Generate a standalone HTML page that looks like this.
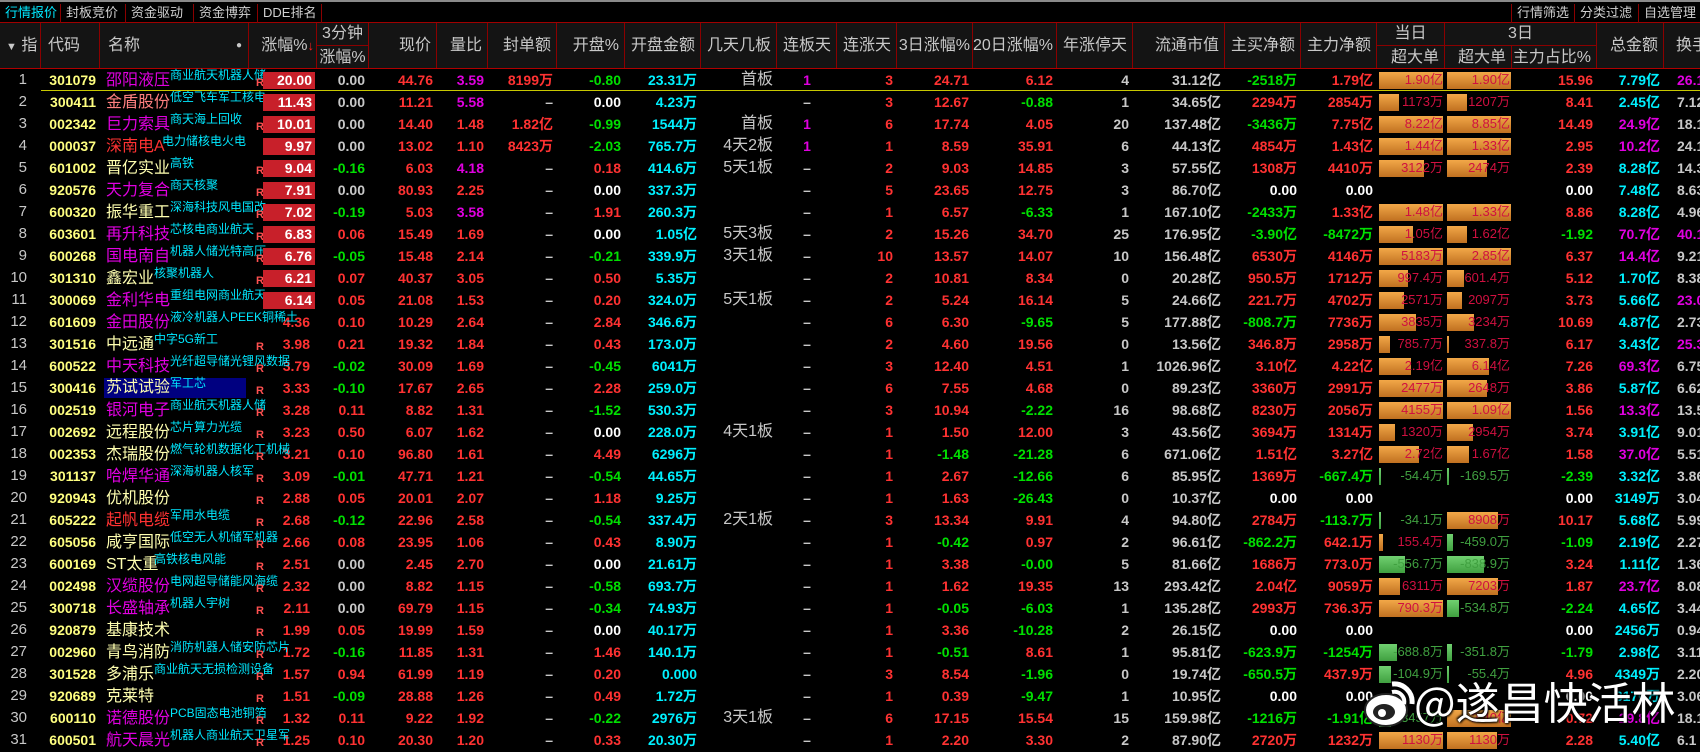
<!DOCTYPE html>
<html><head><meta charset="utf-8">
<style>
*{margin:0;padding:0;box-sizing:border-box}
html,body{width:1700px;height:737px;overflow:hidden;background:#000;font-family:"Liberation Sans","Noto Sans CJK SC",sans-serif}
#tabs{position:absolute;left:0;top:0;width:1700px;height:23px;border-top:2px solid #8a8a8a;border-bottom:1px solid #a00000}
#tabs span{position:absolute;top:2px;height:20px;font-size:13px;color:#d0d0d0;line-height:18px;padding-left:5px;border-right:1px solid #8b0000}
#hd{position:absolute;left:0;top:23px;width:1700px;height:46px;background:#141414;border-bottom:1px solid #b00000}
#hd div{position:absolute;top:0;height:45px;border-right:1px solid #8b0000;color:#c8c8c8;font-size:16px;line-height:45px;text-align:right;padding-right:5px;white-space:nowrap}
#hd div.h2{height:22px;line-height:22px}
#hd div.lo{top:22px;height:23px;line-height:23px;border-top:1px solid #8b0000}
#yl{position:absolute;left:41px;top:90px;width:1659px;height:1px;background:#c8c800;z-index:2}
table{position:absolute;left:0;top:69px;width:1700px;display:grid;grid-template-columns:41px 59px 149px 68px 52px 68px 51px 69px 68px 76px 76px 60px 60px 76px 84px 76px 92px 76px 76px 68px 67px 85px 67px 36px;grid-auto-rows:22px}
colgroup{display:none}
tbody,tr{display:contents}
td{display:block;height:22px;padding:0 4px 0 0;text-align:right;font-size:14px;font-weight:bold;white-space:nowrap;color:#c8c8c8;overflow:visible;line-height:22px;position:relative}
td.n{padding-right:14px;font-weight:normal;font-size:15px}
td.cd{color:#ffff80}
td.nm{text-align:left;padding-left:6px;font-weight:normal}
.nm div{position:relative;white-space:nowrap;height:22px}
.nm span{font-size:16px;line-height:22px;position:absolute;left:0;top:1px}
.nm em{font-style:normal;font-size:12px;line-height:14px;font-weight:normal;color:#00e8ff;position:absolute;top:-1px;z-index:1}
.nm em.e4{left:64px}.nm em.e3{left:48px}.nm em.e5{left:56px}
.zf div{position:relative;height:22px}
.R{position:absolute;left:7px;top:8px;font-size:11px;font-weight:bold;color:#ff5050;line-height:12px;z-index:2}
.bx{position:absolute;left:14px;top:3px;width:52px;height:17px;background:#c8202a;color:#fff;text-align:right;padding-right:3px;line-height:17px;z-index:2}
.zt{position:absolute;right:3px;top:0;color:#ff3232;line-height:22px}
td.ct{text-align:center;padding:0}
td.t{font-weight:normal;font-size:16px}
.r{color:#ff3232}.g{color:#00e000}.c{color:#00f0ff}.m{color:#e000e0}.w{color:#fff}.s{color:#c8c8c8}.p{color:#ffffb0}.k{color:#ff8080}
td.b{padding:0}
.b div{position:relative;height:22px}
.b i{position:absolute;left:2px;top:3px;height:17px;background:linear-gradient(#f2a848,#c07020)}
.b i.gg{background:linear-gradient(#70d070,#40a040)}
.b u{position:absolute;right:2px;top:0;line-height:22px;text-decoration:none;font-size:13px;font-weight:normal;color:#d01040}
.b u.gn{color:#40a040}
td.hs{text-align:left;padding-left:13px}
#wm{position:absolute;left:1362px;top:668px;width:338px;height:69px;z-index:5}
#wm .tx{position:absolute;left:52px;top:4px;font-size:44px;color:#fff;font-family:"Noto Sans CJK SC",sans-serif;line-height:56px;text-shadow:0 0 2px #000,1px 1px 2px #000,-1px -1px 2px #000}
.sel{background:#000080}
</style></head><body>
<div id="tabs">
<span style="left:0;width:61px;color:#00e8ff">行情报价</span>
<span style="left:61px;width:65px">封板竞价</span>
<span style="left:126px;width:68px">资金驱动力</span>
<span style="left:194px;width:64px">资金博弈</span>
<span style="left:258px;width:64px">DDE排名</span>
<span style="left:1511px;width:64px;border-left:1px solid #8b0000">行情筛选</span>
<span style="left:1575px;width:64px">分类过滤</span>
<span style="left:1639px;width:61px;border-right:none">自选管理</span>
</div>
<div id="hd">
<div style="left:0;width:41px;text-align:left;padding-left:6px"><span style="font-size:11px">▼</span> 指</div>
<div style="left:41px;width:59px;text-align:left;padding-left:7px">代码</div>
<div style="left:100px;width:149px;text-align:left;padding-left:8px">名称<span style="position:absolute;right:6px;top:0;font-size:10px">●</span></div>
<div style="left:249px;width:68px;padding-right:2px">涨幅%<span style="color:#ff2020;font-size:13px">↓</span></div>
<div class="h2" style="left:317px;width:52px;text-align:center;padding:0">3分钟</div>
<div class="lo" style="left:317px;width:52px;text-align:center;padding:0">涨幅%</div>
<div style="left:369px;width:68px">现价</div>
<div style="left:437px;width:51px">量比</div>
<div style="left:488px;width:69px">封单额</div>
<div style="left:557px;width:68px">开盘%</div>
<div style="left:625px;width:76px">开盘金额</div>
<div style="left:701px;width:76px">几天几板</div>
<div style="left:777px;width:60px">连板天</div>
<div style="left:837px;width:60px">连涨天</div>
<div style="left:897px;width:76px;padding-right:2px">3日涨幅%</div>
<div style="left:973px;width:84px">20日涨幅%</div>
<div style="left:1057px;width:76px">年涨停天</div>
<div style="left:1133px;width:92px">流通市值</div>
<div style="left:1225px;width:76px">主买净额</div>
<div style="left:1301px;width:76px">主力净额</div>
<div class="h2" style="left:1377px;width:68px;text-align:center;padding:0">当日</div>
<div class="lo" style="left:1377px;width:68px">超大单</div>
<div class="h2" style="left:1445px;width:152px;text-align:center;padding:0">3日</div>
<div class="lo" style="left:1445px;width:67px">超大单</div>
<div class="lo" style="left:1512px;width:85px">主力占比%</div>
<div style="left:1597px;width:67px">总金额</div>
<div style="left:1664px;width:36px;text-align:left;padding-left:12px;border-right:none">换手</div>
</div>
<div id="yl"></div>
<table>
<colgroup><col></colgroup>
<tr><td class="n">1</td><td class="cd">301079</td><td class="nm"><div><span class="m">邵阳液压</span><em class="e4">商业航天机器人储</em></div></td><td class="zf"><div><b class="R">R</b><span class="bx">20.00</span></div></td><td class="s">0.00</td><td class="r">44.76</td><td class="m">3.59</td><td class="r">8199万</td><td class="g">-0.80</td><td class="c">23.31万</td><td class="t">首板</td><td class="ct m">1</td><td class="r">3</td><td class="r">24.71</td><td class="r">6.12</td><td>4</td><td>31.12亿</td><td class="g">-2518万</td><td class="r">1.79亿</td><td class="b"><div><i style="width:64px"></i><u>1.90亿</u></div></td><td class="b"><div><i style="width:64px"></i><u>1.90亿</u></div></td><td class="r">15.96</td><td class="c">7.79亿</td><td class="hs m">26.1</td></tr>
<tr><td class="n">2</td><td class="cd">300411</td><td class="nm"><div><span class="k">金盾股份</span><em class="e4">低空飞车军工核电</em></div></td><td class="zf"><div><span class="bx">11.43</span></div></td><td class="s">0.00</td><td class="r">11.21</td><td class="m">5.58</td><td>–</td><td class="w">0.00</td><td class="c">4.23万</td><td class="t"></td><td class="ct">–</td><td class="r">3</td><td class="r">12.67</td><td class="g">-0.88</td><td>1</td><td>34.65亿</td><td class="r">2294万</td><td class="r">2854万</td><td class="b"><div><i style="width:20px"></i><u>1173万</u></div></td><td class="b"><div><i style="width:20px"></i><u>1207万</u></div></td><td class="r">8.41</td><td class="c">2.45亿</td><td class="hs">7.12</td></tr>
<tr><td class="n">3</td><td class="cd">002342</td><td class="nm"><div><span class="m">巨力索具</span><em class="e4">商天海上回收</em></div></td><td class="zf"><div><b class="R">R</b><span class="bx">10.01</span></div></td><td class="s">0.00</td><td class="r">14.40</td><td class="r">1.48</td><td class="r">1.82亿</td><td class="g">-0.99</td><td class="c">1544万</td><td class="t">首板</td><td class="ct m">1</td><td class="r">6</td><td class="r">17.74</td><td class="r">4.05</td><td>20</td><td>137.48亿</td><td class="g">-3436万</td><td class="r">7.75亿</td><td class="b"><div><i style="width:64px"></i><u>8.22亿</u></div></td><td class="b"><div><i style="width:64px"></i><u>8.85亿</u></div></td><td class="r">14.49</td><td class="m">24.9亿</td><td class="hs">18.1</td></tr>
<tr><td class="n">4</td><td class="cd">000037</td><td class="nm"><div><span class="r">深南电A</span><em class="e5">电力储核电火电</em></div></td><td class="zf"><div><span class="bx">9.97</span></div></td><td class="s">0.00</td><td class="r">13.02</td><td class="r">1.10</td><td class="r">8423万</td><td class="g">-2.03</td><td class="c">765.7万</td><td class="t">4天2板</td><td class="ct m">1</td><td class="r">1</td><td class="r">8.59</td><td class="r">35.91</td><td>6</td><td>44.13亿</td><td class="r">4854万</td><td class="r">1.43亿</td><td class="b"><div><i style="width:64px"></i><u>1.44亿</u></div></td><td class="b"><div><i style="width:64px"></i><u>1.33亿</u></div></td><td class="r">2.95</td><td class="m">10.2亿</td><td class="hs">24.1</td></tr>
<tr><td class="n">5</td><td class="cd">601002</td><td class="nm"><div><span class="p">晋亿实业</span><em class="e4">高铁</em></div></td><td class="zf"><div><b class="R">R</b><span class="bx">9.04</span></div></td><td class="g">-0.16</td><td class="r">6.03</td><td class="m">4.18</td><td>–</td><td class="r">0.18</td><td class="c">414.6万</td><td class="t">5天1板</td><td class="ct">–</td><td class="r">2</td><td class="r">9.03</td><td class="r">14.85</td><td>3</td><td>57.55亿</td><td class="r">1308万</td><td class="r">4410万</td><td class="b"><div><i style="width:45px"></i><u>3122万</u></div></td><td class="b"><div><i style="width:40px"></i><u>2474万</u></div></td><td class="r">2.39</td><td class="c">8.28亿</td><td class="hs">14.3</td></tr>
<tr><td class="n">6</td><td class="cd">920576</td><td class="nm"><div><span class="m">天力复合</span><em class="e4">商天核聚</em></div></td><td class="zf"><div><b class="R">R</b><span class="bx">7.91</span></div></td><td class="s">0.00</td><td class="r">80.93</td><td class="r">2.25</td><td>–</td><td class="w">0.00</td><td class="c">337.3万</td><td class="t"></td><td class="ct">–</td><td class="r">5</td><td class="r">23.65</td><td class="r">12.75</td><td>3</td><td>86.70亿</td><td class="w">0.00</td><td class="w">0.00</td><td></td><td></td><td class="w">0.00</td><td class="c">7.48亿</td><td class="hs">8.63</td></tr>
<tr><td class="n">7</td><td class="cd">600320</td><td class="nm"><div><span class="p">振华重工</span><em class="e4">深海科技风电国改</em></div></td><td class="zf"><div><b class="R">R</b><span class="bx">7.02</span></div></td><td class="g">-0.19</td><td class="r">5.03</td><td class="m">3.58</td><td>–</td><td class="r">1.91</td><td class="c">260.3万</td><td class="t"></td><td class="ct">–</td><td class="r">1</td><td class="r">6.57</td><td class="g">-6.33</td><td>1</td><td>167.10亿</td><td class="g">-2433万</td><td class="r">1.33亿</td><td class="b"><div><i style="width:64px"></i><u>1.48亿</u></div></td><td class="b"><div><i style="width:64px"></i><u>1.33亿</u></div></td><td class="r">8.86</td><td class="c">8.28亿</td><td class="hs">4.96</td></tr>
<tr><td class="n">8</td><td class="cd">603601</td><td class="nm"><div><span class="m">再升科技</span><em class="e4">芯核电商业航天</em></div></td><td class="zf"><div><b class="R">R</b><span class="bx">6.83</span></div></td><td class="r">0.06</td><td class="r">15.49</td><td class="r">1.69</td><td>–</td><td class="w">0.00</td><td class="c">1.05亿</td><td class="t">5天3板</td><td class="ct">–</td><td class="r">2</td><td class="r">15.26</td><td class="r">34.70</td><td>25</td><td>176.95亿</td><td class="g">-3.90亿</td><td class="g">-8472万</td><td class="b"><div><i style="width:34px"></i><u>1.05亿</u></div></td><td class="b"><div><i style="width:20px"></i><u>1.62亿</u></div></td><td class="g">-1.92</td><td class="m">70.7亿</td><td class="hs m">40.1</td></tr>
<tr><td class="n">9</td><td class="cd">600268</td><td class="nm"><div><span class="m">国电南自</span><em class="e4">机器人储光特高压</em></div></td><td class="zf"><div><b class="R">R</b><span class="bx">6.76</span></div></td><td class="g">-0.05</td><td class="r">15.48</td><td class="r">2.14</td><td>–</td><td class="g">-0.21</td><td class="c">339.9万</td><td class="t">3天1板</td><td class="ct">–</td><td class="r">10</td><td class="r">13.57</td><td class="r">14.07</td><td>10</td><td>156.48亿</td><td class="r">6530万</td><td class="r">4146万</td><td class="b"><div><i style="width:64px"></i><u>5183万</u></div></td><td class="b"><div><i style="width:64px"></i><u>2.85亿</u></div></td><td class="r">6.37</td><td class="m">14.4亿</td><td class="hs">9.21</td></tr>
<tr><td class="n">10</td><td class="cd">301310</td><td class="nm"><div><span class="p">鑫宏业</span><em class="e3">核聚机器人</em></div></td><td class="zf"><div><b class="R">R</b><span class="bx">6.21</span></div></td><td class="r">0.07</td><td class="r">40.37</td><td class="r">3.05</td><td>–</td><td class="r">0.50</td><td class="c">5.35万</td><td class="t"></td><td class="ct">–</td><td class="r">2</td><td class="r">10.81</td><td class="r">8.34</td><td>0</td><td>20.28亿</td><td class="r">950.5万</td><td class="r">1712万</td><td class="b"><div><i style="width:29px"></i><u>997.4万</u></div></td><td class="b"><div><i style="width:17px"></i><u>601.4万</u></div></td><td class="r">5.12</td><td class="c">1.70亿</td><td class="hs">8.38</td></tr>
<tr><td class="n">11</td><td class="cd">300069</td><td class="nm"><div><span class="m">金利华电</span><em class="e4">重组电网商业航天</em></div></td><td class="zf"><div><span class="bx">6.14</span></div></td><td class="r">0.05</td><td class="r">21.08</td><td class="r">1.53</td><td>–</td><td class="r">0.20</td><td class="c">324.0万</td><td class="t">5天1板</td><td class="ct">–</td><td class="r">2</td><td class="r">5.24</td><td class="r">16.14</td><td>5</td><td>24.66亿</td><td class="r">221.7万</td><td class="r">4702万</td><td class="b"><div><i style="width:25px"></i><u>2571万</u></div></td><td class="b"><div><i style="width:15px"></i><u>2097万</u></div></td><td class="r">3.73</td><td class="c">5.66亿</td><td class="hs m">23.0</td></tr>
<tr><td class="n">12</td><td class="cd">601609</td><td class="nm"><div><span class="m">金田股份</span><em class="e4">液冷机器人PEEK铜稀土</em></div></td><td class="zf"><div><span class="zt">4.36</span></div></td><td class="r">0.10</td><td class="r">10.29</td><td class="r">2.64</td><td>–</td><td class="r">2.84</td><td class="c">346.6万</td><td class="t"></td><td class="ct">–</td><td class="r">6</td><td class="r">6.30</td><td class="g">-9.65</td><td>5</td><td>177.88亿</td><td class="g">-808.7万</td><td class="r">7736万</td><td class="b"><div><i style="width:37px"></i><u>3835万</u></div></td><td class="b"><div><i style="width:27px"></i><u>3234万</u></div></td><td class="r">10.69</td><td class="c">4.87亿</td><td class="hs">2.73</td></tr>
<tr><td class="n">13</td><td class="cd">301516</td><td class="nm"><div><span class="p">中远通</span><em class="e3">中字5G新工</em></div></td><td class="zf"><div><b class="R">R</b><span class="zt">3.98</span></div></td><td class="r">0.21</td><td class="r">19.32</td><td class="r">1.84</td><td>–</td><td class="r">0.43</td><td class="c">173.0万</td><td class="t"></td><td class="ct">–</td><td class="r">2</td><td class="r">4.60</td><td class="r">19.56</td><td>0</td><td>13.56亿</td><td class="r">346.8万</td><td class="r">2958万</td><td class="b"><div><i style="width:11px"></i><u>785.7万</u></div></td><td class="b"><div><i style="width:2px"></i><u>337.8万</u></div></td><td class="r">6.17</td><td class="c">3.43亿</td><td class="hs m">25.3</td></tr>
<tr><td class="n">14</td><td class="cd">600522</td><td class="nm"><div><span class="m">中天科技</span><em class="e4">光纤超导储光锂风数据</em></div></td><td class="zf"><div><b class="R">R</b><span class="zt">3.79</span></div></td><td class="g">-0.02</td><td class="r">30.09</td><td class="r">1.69</td><td>–</td><td class="g">-0.45</td><td class="c">6041万</td><td class="t"></td><td class="ct">–</td><td class="r">3</td><td class="r">12.40</td><td class="r">4.51</td><td>1</td><td>1026.96亿</td><td class="r">3.10亿</td><td class="r">4.22亿</td><td class="b"><div><i style="width:32px"></i><u>2.19亿</u></div></td><td class="b"><div><i style="width:42px"></i><u>6.14亿</u></div></td><td class="r">7.26</td><td class="m">69.3亿</td><td class="hs">6.75</td></tr>
<tr><td class="n">15</td><td class="cd">300416</td><td class="nm"><div><span class="p sel" style="left:-2px;top:1px;padding-left:2px;width:142px;height:20px;line-height:20px">苏试试验</span><em class="e4">军工芯</em></div></td><td class="zf"><div><b class="R">R</b><span class="zt">3.33</span></div></td><td class="g">-0.10</td><td class="r">17.67</td><td class="r">2.65</td><td>–</td><td class="r">2.28</td><td class="c">259.0万</td><td class="t"></td><td class="ct">–</td><td class="r">6</td><td class="r">7.55</td><td class="r">4.68</td><td>0</td><td>89.23亿</td><td class="r">3360万</td><td class="r">2991万</td><td class="b"><div><i style="width:64px"></i><u>2477万</u></div></td><td class="b"><div><i style="width:40px"></i><u>2648万</u></div></td><td class="r">3.86</td><td class="c">5.87亿</td><td class="hs">6.62</td></tr>
<tr><td class="n">16</td><td class="cd">002519</td><td class="nm"><div><span class="m">银河电子</span><em class="e4">商业航天机器人储</em></div></td><td class="zf"><div><b class="R">R</b><span class="zt">3.28</span></div></td><td class="r">0.11</td><td class="r">8.82</td><td class="r">1.31</td><td>–</td><td class="g">-1.52</td><td class="c">530.3万</td><td class="t"></td><td class="ct">–</td><td class="r">3</td><td class="r">10.94</td><td class="g">-2.22</td><td>16</td><td>98.68亿</td><td class="r">8230万</td><td class="r">2056万</td><td class="b"><div><i style="width:64px"></i><u>4155万</u></div></td><td class="b"><div><i style="width:64px"></i><u>1.09亿</u></div></td><td class="r">1.56</td><td class="m">13.3亿</td><td class="hs">13.5</td></tr>
<tr><td class="n">17</td><td class="cd">002692</td><td class="nm"><div><span class="p">远程股份</span><em class="e4">芯片算力光缆</em></div></td><td class="zf"><div><b class="R">R</b><span class="zt">3.23</span></div></td><td class="r">0.50</td><td class="r">6.07</td><td class="r">1.62</td><td>–</td><td class="w">0.00</td><td class="c">228.0万</td><td class="t">4天1板</td><td class="ct">–</td><td class="r">1</td><td class="r">1.50</td><td class="r">12.00</td><td>3</td><td>43.56亿</td><td class="r">3694万</td><td class="r">1314万</td><td class="b"><div><i style="width:16px"></i><u>1320万</u></div></td><td class="b"><div><i style="width:26px"></i><u>2954万</u></div></td><td class="r">3.74</td><td class="c">3.91亿</td><td class="hs">9.01</td></tr>
<tr><td class="n">18</td><td class="cd">002353</td><td class="nm"><div><span class="p">杰瑞股份</span><em class="e4">燃气轮机数据化工机械</em></div></td><td class="zf"><div><b class="R">R</b><span class="zt">3.21</span></div></td><td class="r">0.10</td><td class="r">96.80</td><td class="r">1.61</td><td>–</td><td class="r">4.49</td><td class="c">6296万</td><td class="t"></td><td class="ct">–</td><td class="r">1</td><td class="g">-1.48</td><td class="g">-21.28</td><td>6</td><td>671.06亿</td><td class="r">1.51亿</td><td class="r">3.27亿</td><td class="b"><div><i style="width:40px"></i><u>2.72亿</u></div></td><td class="b"><div><i style="width:22px"></i><u>1.67亿</u></div></td><td class="r">1.58</td><td class="m">37.0亿</td><td class="hs">5.51</td></tr>
<tr><td class="n">19</td><td class="cd">301137</td><td class="nm"><div><span class="m">哈焊华通</span><em class="e4">深海机器人核军</em></div></td><td class="zf"><div><b class="R">R</b><span class="zt">3.09</span></div></td><td class="g">-0.01</td><td class="r">47.71</td><td class="r">1.21</td><td>–</td><td class="g">-0.54</td><td class="c">44.65万</td><td class="t"></td><td class="ct">–</td><td class="r">1</td><td class="r">2.67</td><td class="g">-12.66</td><td>6</td><td>85.95亿</td><td class="r">1369万</td><td class="g">-667.4万</td><td class="b"><div><i class="gg" style="width:2px"></i><u class="gn">-54.4万</u></div></td><td class="b"><div><i class="gg" style="width:2px"></i><u class="gn">-169.5万</u></div></td><td class="g">-2.39</td><td class="c">3.32亿</td><td class="hs">3.86</td></tr>
<tr><td class="n">20</td><td class="cd">920943</td><td class="nm"><div><span class="p">优机股份</span></div></td><td class="zf"><div><b class="R">R</b><span class="zt">2.88</span></div></td><td class="r">0.05</td><td class="r">20.01</td><td class="r">2.07</td><td>–</td><td class="r">1.18</td><td class="c">9.25万</td><td class="t"></td><td class="ct">–</td><td class="r">1</td><td class="r">1.63</td><td class="g">-26.43</td><td>0</td><td>10.37亿</td><td class="w">0.00</td><td class="w">0.00</td><td></td><td></td><td class="w">0.00</td><td class="c">3149万</td><td class="hs">3.04</td></tr>
<tr><td class="n">21</td><td class="cd">605222</td><td class="nm"><div><span class="r">起帆电缆</span><em class="e4">军用水电缆</em></div></td><td class="zf"><div><b class="R">R</b><span class="zt">2.68</span></div></td><td class="g">-0.12</td><td class="r">22.96</td><td class="r">2.58</td><td>–</td><td class="g">-0.54</td><td class="c">337.4万</td><td class="t">2天1板</td><td class="ct">–</td><td class="r">3</td><td class="r">13.34</td><td class="r">9.91</td><td>4</td><td>94.80亿</td><td class="r">2784万</td><td class="g">-113.7万</td><td class="b"><div><i class="gg" style="width:2px"></i><u class="gn">-34.1万</u></div></td><td class="b"><div><i style="width:51px"></i><u>8908万</u></div></td><td class="r">10.17</td><td class="c">5.68亿</td><td class="hs">5.99</td></tr>
<tr><td class="n">22</td><td class="cd">605056</td><td class="nm"><div><span class="p">咸亨国际</span><em class="e4">低空无人机储军机器</em></div></td><td class="zf"><div><b class="R">R</b><span class="zt">2.66</span></div></td><td class="r">0.08</td><td class="r">23.95</td><td class="r">1.06</td><td>–</td><td class="r">0.43</td><td class="c">8.90万</td><td class="t"></td><td class="ct">–</td><td class="r">1</td><td class="g">-0.42</td><td class="r">0.97</td><td>2</td><td>96.61亿</td><td class="g">-862.2万</td><td class="r">642.1万</td><td class="b"><div><i style="width:4px"></i><u>155.4万</u></div></td><td class="b"><div><i class="gg" style="width:6px"></i><u class="gn">-459.0万</u></div></td><td class="g">-1.09</td><td class="c">2.19亿</td><td class="hs">2.27</td></tr>
<tr><td class="n">23</td><td class="cd">600169</td><td class="nm"><div><span class="p">ST太重</span><em class="e3">高铁核电风能</em></div></td><td class="zf"><div><b class="R">R</b><span class="zt">2.51</span></div></td><td class="s">0.00</td><td class="r">2.45</td><td class="r">2.70</td><td>–</td><td class="w">0.00</td><td class="c">21.61万</td><td class="t"></td><td class="ct">–</td><td class="r">1</td><td class="r">3.38</td><td class="g">-0.00</td><td>5</td><td>81.66亿</td><td class="r">1686万</td><td class="r">773.0万</td><td class="b"><div><i class="gg" style="width:26px"></i><u class="gn">-556.7万</u></div></td><td class="b"><div><i class="gg" style="width:37px"></i><u class="gn">-838.9万</u></div></td><td class="r">3.24</td><td class="c">1.11亿</td><td class="hs">1.36</td></tr>
<tr><td class="n">24</td><td class="cd">002498</td><td class="nm"><div><span class="m">汉缆股份</span><em class="e4">电网超导储能风海缆</em></div></td><td class="zf"><div><b class="R">R</b><span class="zt">2.32</span></div></td><td class="s">0.00</td><td class="r">8.82</td><td class="r">1.15</td><td>–</td><td class="g">-0.58</td><td class="c">693.7万</td><td class="t"></td><td class="ct">–</td><td class="r">1</td><td class="r">1.62</td><td class="r">19.35</td><td>13</td><td>293.42亿</td><td class="r">2.04亿</td><td class="r">9059万</td><td class="b"><div><i style="width:21px"></i><u>6311万</u></div></td><td class="b"><div><i style="width:51px"></i><u>7203万</u></div></td><td class="r">1.87</td><td class="m">23.7亿</td><td class="hs">8.08</td></tr>
<tr><td class="n">25</td><td class="cd">300718</td><td class="nm"><div><span class="m">长盛轴承</span><em class="e4">机器人宇树</em></div></td><td class="zf"><div><b class="R">R</b><span class="zt">2.11</span></div></td><td class="s">0.00</td><td class="r">69.79</td><td class="r">1.15</td><td>–</td><td class="g">-0.34</td><td class="c">74.93万</td><td class="t"></td><td class="ct">–</td><td class="r">1</td><td class="g">-0.05</td><td class="g">-6.03</td><td>1</td><td>135.28亿</td><td class="r">2993万</td><td class="r">736.3万</td><td class="b"><div><i style="width:64px"></i><u>790.3万</u></div></td><td class="b"><div><i class="gg" style="width:12px"></i><u class="gn">-534.8万</u></div></td><td class="g">-2.24</td><td class="c">4.65亿</td><td class="hs">3.44</td></tr>
<tr><td class="n">26</td><td class="cd">920879</td><td class="nm"><div><span class="p">基康技术</span></div></td><td class="zf"><div><b class="R">R</b><span class="zt">1.99</span></div></td><td class="r">0.05</td><td class="r">19.99</td><td class="r">1.59</td><td>–</td><td class="w">0.00</td><td class="c">40.17万</td><td class="t"></td><td class="ct">–</td><td class="r">1</td><td class="r">3.36</td><td class="g">-10.28</td><td>2</td><td>26.15亿</td><td class="w">0.00</td><td class="w">0.00</td><td></td><td></td><td class="w">0.00</td><td class="c">2456万</td><td class="hs">0.94</td></tr>
<tr><td class="n">27</td><td class="cd">002960</td><td class="nm"><div><span class="p">青鸟消防</span><em class="e4">消防机器人储安防芯片</em></div></td><td class="zf"><div><b class="R">R</b><span class="zt">1.72</span></div></td><td class="g">-0.16</td><td class="r">11.85</td><td class="r">1.31</td><td>–</td><td class="r">1.46</td><td class="c">140.1万</td><td class="t"></td><td class="ct">–</td><td class="r">1</td><td class="g">-0.51</td><td class="r">8.61</td><td>1</td><td>95.81亿</td><td class="g">-623.9万</td><td class="g">-1254万</td><td class="b"><div><i class="gg" style="width:18px"></i><u class="gn">-688.8万</u></div></td><td class="b"><div><i class="gg" style="width:5px"></i><u class="gn">-351.8万</u></div></td><td class="g">-1.79</td><td class="c">2.98亿</td><td class="hs">3.11</td></tr>
<tr><td class="n">28</td><td class="cd">301528</td><td class="nm"><div><span class="p">多浦乐</span><em class="e3">商业航天无损检测设备</em></div></td><td class="zf"><div><b class="R">R</b><span class="zt">1.57</span></div></td><td class="r">0.94</td><td class="r">61.99</td><td class="r">1.19</td><td>–</td><td class="r">0.20</td><td class="c">0.000</td><td class="t"></td><td class="ct">–</td><td class="r">3</td><td class="r">8.54</td><td class="g">-1.96</td><td>0</td><td>19.74亿</td><td class="g">-650.5万</td><td class="r">437.9万</td><td class="b"><div><i class="gg" style="width:12px"></i><u class="gn">-104.9万</u></div></td><td class="b"><div><i class="gg" style="width:2px"></i><u class="gn">-55.4万</u></div></td><td class="r">4.96</td><td class="c">4349万</td><td class="hs">2.20</td></tr>
<tr><td class="n">29</td><td class="cd">920689</td><td class="nm"><div><span class="p">克莱特</span></div></td><td class="zf"><div><b class="R">R</b><span class="zt">1.51</span></div></td><td class="g">-0.09</td><td class="r">28.88</td><td class="r">1.26</td><td>–</td><td class="r">0.49</td><td class="c">1.72万</td><td class="t"></td><td class="ct">–</td><td class="r">1</td><td class="r">0.39</td><td class="g">-9.47</td><td>1</td><td>10.95亿</td><td class="w">0.00</td><td class="w">0.00</td><td></td><td></td><td class="w">0.00</td><td class="c">3176万</td><td class="hs">3.06</td></tr>
<tr><td class="n">30</td><td class="cd">600110</td><td class="nm"><div><span class="m">诺德股份</span><em class="e4">PCB固态电池铜箔</em></div></td><td class="zf"><div><b class="R">R</b><span class="zt">1.32</span></div></td><td class="r">0.11</td><td class="r">9.22</td><td class="r">1.92</td><td>–</td><td class="g">-0.22</td><td class="c">2976万</td><td class="t">3天1板</td><td class="ct">–</td><td class="r">6</td><td class="r">17.15</td><td class="r">15.54</td><td>15</td><td>159.98亿</td><td class="g">-1216万</td><td class="g">-1.91亿</td><td class="b"><div><i class="gg" style="width:12px"></i><u class="gn">-3457万</u></div></td><td class="b"><div><i style="width:64px"></i><u>2.40亿</u></div></td><td class="r">0.72</td><td class="m">29.8亿</td><td class="hs">18.1</td></tr>
<tr><td class="n">31</td><td class="cd">600501</td><td class="nm"><div><span class="m">航天晨光</span><em class="e4">机器人商业航天卫星军</em></div></td><td class="zf"><div><b class="R">R</b><span class="zt">1.25</span></div></td><td class="r">0.10</td><td class="r">20.30</td><td class="r">1.20</td><td>–</td><td class="r">0.33</td><td class="c">20.30万</td><td class="t"></td><td class="ct">–</td><td class="r">1</td><td class="r">2.20</td><td class="r">3.30</td><td>2</td><td>87.90亿</td><td class="r">2720万</td><td class="r">1232万</td><td class="b"><div><i style="width:64px"></i><u>1130万</u></div></td><td class="b"><div><i style="width:50px"></i><u>1130万</u></div></td><td class="r">2.28</td><td class="c">5.40亿</td><td class="hs">6.1</td></tr>
</table>
<div id="wm">
<svg width="56" height="60" viewBox="0 0 56 60" style="position:absolute;left:0;top:6px">
<ellipse cx="24" cy="36" rx="21" ry="16" fill="#fff" stroke="#222" stroke-width="2"/>
<ellipse cx="22" cy="38" rx="11" ry="8" fill="#222"/>
<circle cx="20" cy="39" r="4" fill="#fff"/>
<path d="M30 10 A18 18 0 0 1 50 30" fill="none" stroke="#fff" stroke-width="5"/>
<path d="M30 18 A10 10 0 0 1 42 30" fill="none" stroke="#fff" stroke-width="4"/>
</svg>
<div class="tx">@遂昌快活林</div>
</div>
</body></html>
